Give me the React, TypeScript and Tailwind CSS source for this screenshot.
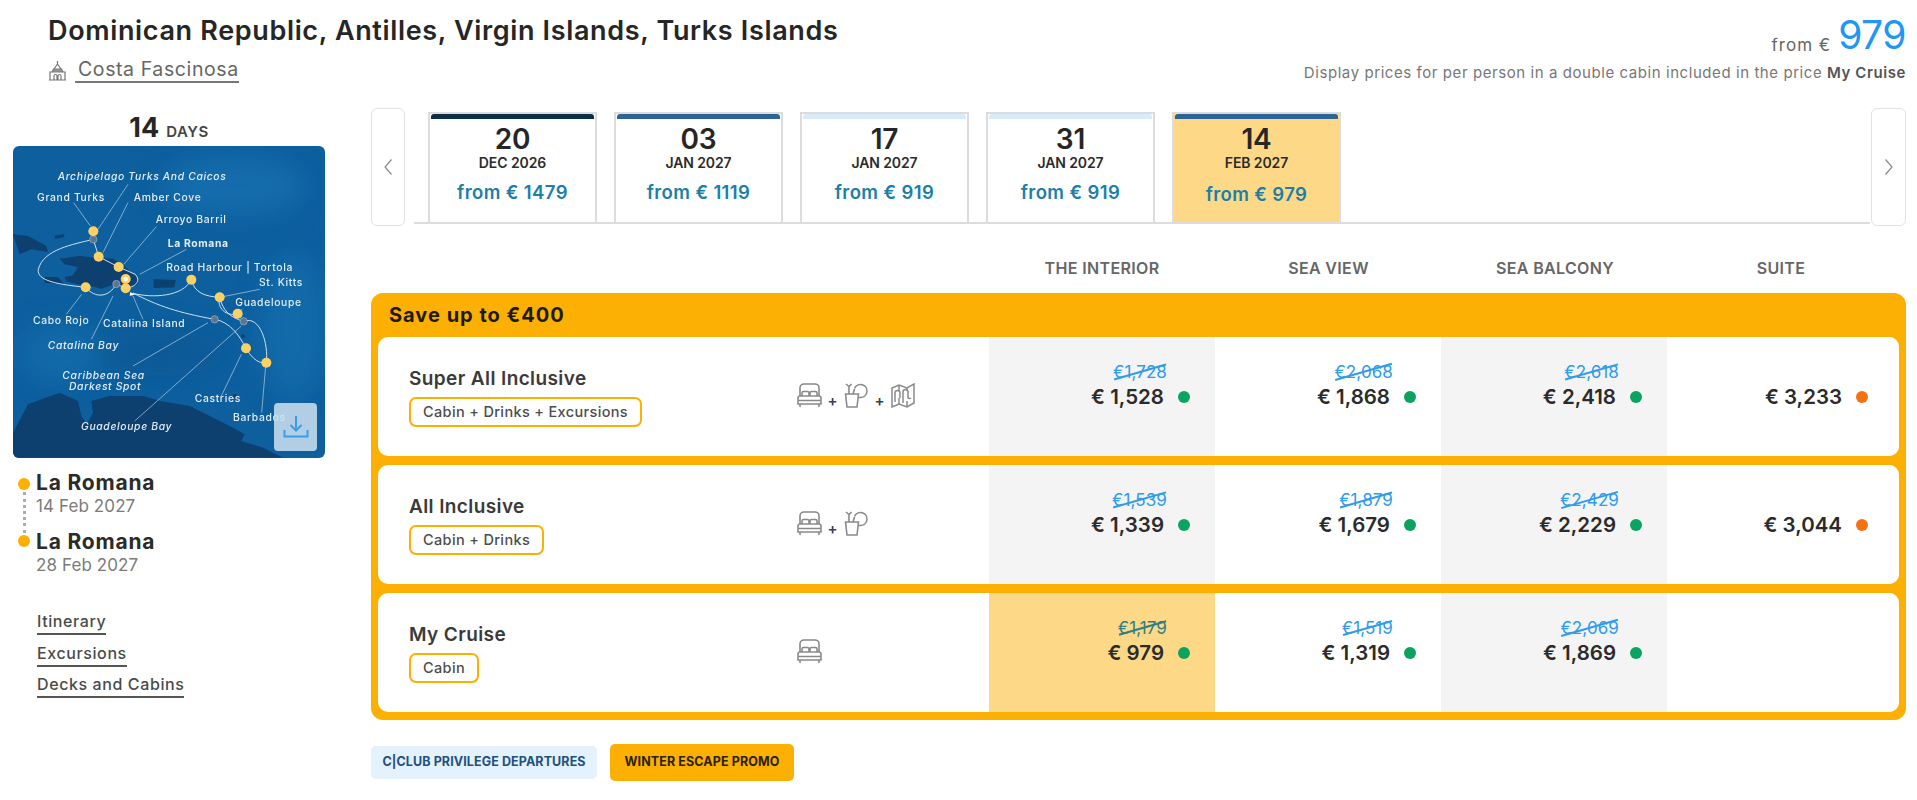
const sans = { fontFamily: '"Inter", "Liberation Sans", sans-serif' };

const departures = [
  { day: "20", month: "DEC 2026", price: "from € 1479", bar: "bg-[#0b2f48]" },
  { day: "03", month: "JAN 2027", price: "from € 1119", bar: "bg-[#2b6597]" },
  { day: "17", month: "JAN 2027", price: "from € 919", bar: "bg-[#d8ebfa]" },
  { day: "31", month: "JAN 2027", price: "from € 919", bar: "bg-[#d8ebfa]" },
  { day: "14", month: "FEB 2027", price: "from € 979", bar: "bg-[#2b6597]", active: true },
];

type Cell = { old?: string; price?: string; dot?: string; active?: boolean };

const rows: { name: string; tag: string; icons: number; cells: Cell[] }[] = [
  {
    name: "Super All Inclusive",
    tag: "Cabin + Drinks + Excursions",
    icons: 3,
    cells: [
      { old: "€1,728", price: "€ 1,528", dot: "bg-[#0ba360]" },
      { old: "€2,068", price: "€ 1,868", dot: "bg-[#0ba360]" },
      { old: "€2,618", price: "€ 2,418", dot: "bg-[#0ba360]" },
      { price: "€ 3,233", dot: "bg-[#f57212]" },
    ],
  },
  {
    name: "All Inclusive",
    tag: "Cabin + Drinks",
    icons: 2,
    cells: [
      { old: "€1,539", price: "€ 1,339", dot: "bg-[#0ba360]" },
      { old: "€1,879", price: "€ 1,679", dot: "bg-[#0ba360]" },
      { old: "€2,429", price: "€ 2,229", dot: "bg-[#0ba360]" },
      { price: "€ 3,044", dot: "bg-[#f57212]" },
    ],
  },
  {
    name: "My Cruise",
    tag: "Cabin",
    icons: 1,
    cells: [
      { old: "€1,179", price: "€ 979", dot: "bg-[#0ba360]", active: true },
      { old: "€1,519", price: "€ 1,319", dot: "bg-[#0ba360]" },
      { old: "€2,069", price: "€ 1,869", dot: "bg-[#0ba360]" },
      {},
    ],
  },
];

function Bed() {
  return (
    <svg width="25" height="25" viewBox="0 0 25 25" fill="none" stroke="#8a8a8a" strokeWidth="1.6">
      <path d="M3 13V5a4 4 0 0 1 4-4h11a4 4 0 0 1 4 4v8" />
      <path d="M5 13v-3a1.500 1.500 0 0 1 1.500-1.500h4A1.500 1.500 0 0 1 12 10v3M13 13v-3a1.500 1.500 0 0 1 1.500-1.500h4A1.500 1.500 0 0 1 20 10v3" />
      <path d="M1 15a2 2 0 0 1 2-2h19a2 2 0 0 1 2 2v6H1zM1 17.500h23M3 21v3M22 21v3" />
    </svg>
  );
}

function Drink() {
  return (
    <svg width="25" height="25" viewBox="0 0 25 25" fill="none" stroke="#8a8a8a" strokeWidth="1.6">
      <path d="M1.500 11h13l-1.500 13H3z" />
      <path d="M5 11V3.500M2 1l3 2.500L7.500 1M9 11l1.500-5" />
      <path d="M10.500 5.500a6.500 6.500 0 1 1 6 9h-2" />
    </svg>
  );
}

function MapIcon() {
  return (
    <svg width="24" height="25" viewBox="0 0 24 25" fill="none" stroke="#8a8a8a" strokeWidth="1.500">
      <path d="M1 5l7-3 8 3 7-4v19l-7 4-8-3-7 3z" />
      <path d="M8 2v6M8 15v6M16 5v3M16 18v6" />
      <path d="M4 19v-9a2.500 2.500 0 0 1 5 0v5M12 20V9a2.500 2.500 0 0 1 5 0v6a2.500 2.500 0 0 0 3 0" />
    </svg>
  );
}

function Plus() {
  return <span className="mt-[10px] w-[11px] text-center text-[15px] leading-none font-semibold text-[#3b3f55]">+</span>;
}

function Ship() {
  return (
    <svg width="19" height="21" viewBox="0 0 19 21" fill="none" stroke="#777" strokeWidth="1.200">
      <path d="M9.500 1v3M6 9l3.500-5L13 9" />
      <path d="M4 12l1.500-3h8L15 12" fill="#999" />
      <path d="M2 12h15v8H2zM1 20h17" />
      <path d="M6 20v-4a1.500 1.500 0 0 1 3 0v4M10 20v-4a1.500 1.500 0 0 1 3 0v4" />
    </svg>
  );
}

function RouteMap() {
  const pins = [
    [281, 276], [297, 352], [357, 383], [378, 419], [378, 447], [258, 444],
    [575, 421], [660, 474], [714, 523], [739, 627], [800, 670],
  ];
  const grey = [[281, 300], [350, 434], [645, 540], [732, 546]];
  const labels: [string, number, number, boolean?, boolean?][] = [
    ["Archipelago Turks And Caicos", 174, 122, true],
    ["Grand Turks", 112, 184],
    ["Amber Cove", 402, 186],
    ["Arroyo Barril", 468, 252],
    ["La Romana", 504, 322, false, true],
    ["Road Harbour | Tortola", 500, 396],
    ["St. Kitts", 778, 441],
    ["Guadeloupe", 707, 499],
    ["Cabo Rojo", 100, 553],
    ["Catalina Island", 310, 563],
    ["Catalina Bay", 144, 628, true],
    ["Caribbean Sea", 188, 718, true],
    ["Darkest Spot", 208, 752, true],
    ["Castries", 585, 789],
    ["Barbados", 700, 845],
    ["Guadeloupe Bay", 244, 871, true],
  ];
  return (
    <svg viewBox="40 20 936 936" className="block h-full w-full">
      <defs>
        <filter id="soft">
          <feGaussianBlur stdDeviation="1.200" />
        </filter>
        <filter id="wash">
          <feGaussianBlur stdDeviation="40" />
        </filter>
      </defs>
      <rect x="40" y="20" width="936" height="936" fill="#0d5f9e" />
      <g filter="url(#wash)" opacity="0.55">
        <ellipse cx="700" cy="140" rx="220" ry="90" fill="#1a78b8" />
        <ellipse cx="880" cy="560" rx="100" ry="220" fill="#1873b2" />
        <ellipse cx="480" cy="640" rx="200" ry="70" fill="#0a5592" />
        <ellipse cx="180" cy="640" rx="120" ry="90" fill="#1873b2" />
      </g>
      <g filter="url(#soft)">
        <g fill="#0b3f6e">
          <path d="M40 285l45 5 55 30 5 18-50-8-35 15z" />
          <path d="M180 358l60-8 50 6 50 2 40 28 32 30 3 18-40 12-40-8-30 10-30-8-45-6-30-8-5-12 25-6 15-25-40-8z" />
          <path d="M135 412l40 2 18 20-58-4z" />
          <path d="M462 420l66 2-4 22-62 2z" />
          <path d="M165 290l30-6-4 10-24 4z" />
          <path d="M40 955V880L85 795L180 760L235 785L245 830L262 855L280 820L275 785L330 770L430 770L480 785L570 800L640 835L700 865L735 885L725 905L790 925L850 955Z" />
          <circle cx="730" cy="590" r="5" />
          <circle cx="705" cy="770" r="6" />
        </g>
        <g fill="none" stroke="#cfe0ee" strokeWidth="3">
          <path d="M281 300c-60 15-150 30-165 90-6 35 60 45 142 54" />
          <path d="M281 300l16 52 60 31 50 22c18 20 0 38-29 42" />
          <path d="M258 444c30 35 70 30 92-10l28 13" />
          <path d="M400 462c60 15 150 10 175-41 10 40 40 50 85 53 10 40 30 60 72 72 50-20 75 70 68 124-30 5-50-25-61-43-20-40-50-80-94-87-110-20-170-40-245-79" />
          <path d="M660 474c-10 30 20 60 54 49" />
        </g>
        <g fill="none" stroke="#b9d2e6" strokeWidth="2">
          <path d="M222 190l50 70M385 135L295 270M385 190L310 340M470 262L372 375M560 330L420 405M780 450l-110 22M728 510l-10 5M246 465l-46 60M400 470l30 70M340 470L275 600M625 550L400 680M725 560L405 845M725 645L665 770M798 680l-12 140" />
        </g>
        <path d="M392 458l14 8-16 3z" fill="#fff" />
        {grey.map(([x, y]) => (
          <circle key={`${x}-${y}`} cx={x} cy={y} r="11" fill="#5a7690" stroke="#b8c8d6" strokeWidth="1.500" />
        ))}
        {pins.map(([x, y]) => (
          <circle key={`${x}-${y}`} cx={x} cy={y} r="15" fill="#fcd062" />
        ))}
        <circle cx="378" cy="419" r="7" fill="#fff" opacity="0.85" />
        {labels.map(([text, x, y, italic, bold]) => (
          <text
            key={text}
            x={x}
            y={y}
            fill="#e3edf5"
            fontSize="31"
            letterSpacing="2"
            fontStyle={italic ? "italic" : "normal"}
            fontWeight={bold ? 700 : 500}
            style={sans}
          >
            {text}
          </text>
        ))}
      </g>
    </svg>
  );
}

function OldPrice({ value, active }: { value: string; active?: boolean }) {
  return (
    <span
      className={`relative mr-[23px] text-[17px] leading-[20px] tracking-[0.1px] ${
        active ? "text-[#2f7f86]" : "text-[#2f9bea]"
      }`}
    >
      {value}
      <span
        className={`absolute top-[9px] left-0 h-[1.5px] w-full -rotate-[16deg] ${
          active ? "bg-[#2f7f86]" : "bg-[#2f9bea]"
        }`}
      />
    </span>
  );
}

export default function App() {
  return (
    <div className="h-[800px] w-full overflow-hidden bg-white text-[#2b2b2b]" style={sans}>
      <div className="flex items-start justify-between pt-[13px] pr-[11px] pl-[48px]">
        <div>
          <h1 className="text-[27px] leading-[36px] font-semibold tracking-[0.65px] text-[#262626]">
            Dominican Republic, Antilles, Virgin Islands, Turks Islands
          </h1>
          <div className="mt-[8px] flex items-center">
            <Ship />
            <a className="ml-[8px] border-b-2 border-[#777] pl-[3px] text-[19.500px] leading-[24px] tracking-[0.6px] text-[#666]">
              Costa Fascinosa
            </a>
          </div>
        </div>
        <div className="flex flex-col items-end">
          <div className="flex h-[44px] items-end">
            <span className="mr-[7px] mb-[1px] text-[17px] leading-[22px] tracking-[1px] text-[#666]">from €</span>
            <span className="text-[39px] leading-[44px] tracking-[-0.5px] text-[#2196f3]">979</span>
          </div>
          <p className="mt-[7px] text-[15px] leading-[18px] tracking-[0.57px] text-[#777]">
            Display prices for per person in a double cabin included in the price{" "}
            <span className="font-semibold text-[#555]">My Cruise</span>
          </p>
        </div>
      </div>

      <div className="mt-[25px] flex pl-[13px]">
        <aside className="w-[312px]">
          <div className="mt-[4px] flex h-[32px] items-baseline justify-center leading-[32px]">
            <span className="text-[27px] font-bold text-[#262626]">14</span>
            <span className="ml-[7px] text-[15px] font-semibold tracking-[0.5px] text-[#444]">DAYS</span>
          </div>
          <div className="relative mt-[2px] h-[312px] w-[312px] overflow-hidden rounded-[6px]">
            <RouteMap />
            <div className="absolute right-[8px] bottom-[7px] flex h-[48px] w-[43px] items-center justify-center rounded-[4px] bg-[#cfe2f0]/85">
              <svg width="26" height="26" viewBox="0 0 26 26" fill="none" stroke="#3c9ce6" strokeWidth="2">
                <path d="M13 2v14M7.500 11l5.500 5.500 5.500-5.500M1.500 16v6.500h23V16" />
              </svg>
            </div>
          </div>

          <div className="mt-[13px] flex">
            <div className="ml-[5px] flex w-[12px] flex-col items-center pt-[7px]">
              <span className="size-[12px] rounded-full bg-[#fbb003]" />
              <span className="my-[2px] h-[41px] border-l-[3px] border-dotted border-[#a9adb5]" />
              <span className="size-[12px] rounded-full bg-[#fbb003]" />
            </div>
            <div className="ml-[6px]">
              <div className="text-[21px] leading-[24px] font-bold tracking-[0.8px] text-[#2b2b2b]">La Romana</div>
              <div className="text-[17px] leading-[22px] tracking-[0.1px] text-[#7b7b7b]">14 Feb 2027</div>
              <div className="mt-[13px] text-[21px] leading-[24px] font-bold tracking-[0.8px] text-[#2b2b2b]">La Romana</div>
              <div className="text-[17px] leading-[22px] tracking-[0.1px] text-[#7b7b7b]">28 Feb 2027</div>
            </div>
          </div>

          <nav className="mt-[34px] ml-[24px] flex flex-col items-start gap-[6.5px] text-[16px] leading-[22px] font-medium tracking-[0.6px] text-[#4a4a4a]">
            <a className="border-b-2 border-[#555] pb-[1px]">Itinerary</a>
            <a className="border-b-2 border-[#555] pb-[1px]">Excursions</a>
            <a className="border-b-2 border-[#555] pb-[1px]">Decks and Cabins</a>
          </nav>
        </aside>

        <main className="ml-[46px] w-[1535px]">
          <div className="flex h-[118px] items-start">
            <button className="flex h-[118px] w-[34px] items-center justify-center rounded-[6px] border border-[#e2e2e2] bg-white">
              <svg width="10" height="18" viewBox="0 0 10 18" fill="none" stroke="#8a8a8a" strokeWidth="1.200">
                <path d="M8.500 1.500L2 9l6.500 7.500" />
              </svg>
            </button>
            <div className="ml-[9px] h-[116px] w-[1456px] border-b-2 border-[#dcdcdc]">
              <div className="ml-[14px] flex gap-[17px] pt-[4px]">
                {departures.map((d) => (
                  <div
                    key={d.day}
                    className={`flex h-[110px] w-[169px] flex-col items-center border-2 border-b-0 border-[#dcdcdc] ${
                      d.active ? "bg-[#fdd987]" : "bg-white"
                    }`}
                  >
                    <span className={`mx-[2px] h-[5px] w-[163px] rounded-t-[3px] ${d.bar}`} />
                    <span className="mt-[7px] text-[28px] leading-[26px] font-semibold tracking-[-0.2px] text-[#262626]">
                      {d.day}
                    </span>
                    <span className="mt-[2px] text-[14px] leading-[18px] font-semibold tracking-[-0.1px] text-[#2b2b2b]">
                      {d.month}
                    </span>
                    <span
                      className={`text-[18.500px] leading-[24px] font-semibold tracking-[0.4px] text-[#1b7fa9] ${
                        d.active ? "mt-[10px]" : "mt-[8px]"
                      }`}
                    >
                      {d.price}
                    </span>
                  </div>
                ))}
              </div>
            </div>
            <button className="ml-[1px] flex h-[118px] w-[35px] items-center justify-center rounded-[6px] border border-[#e2e2e2] bg-white">
              <svg width="10" height="18" viewBox="0 0 10 18" fill="none" stroke="#8a8a8a" strokeWidth="1.200">
                <path d="M1.500 1.500L8 9l-6.500 7.500" />
              </svg>
            </button>
          </div>

          <div className="mt-[24px] flex h-[36px] items-center pl-[618px] text-[16px] font-semibold tracking-[0.35px] text-[#666]">
            <span className="w-[226px] text-center">THE INTERIOR</span>
            <span className="w-[227px] text-center">SEA VIEW</span>
            <span className="w-[226px] text-center">SEA BALCONY</span>
            <span className="w-[226px] text-center">SUITE</span>
          </div>

          <section className="mt-[7px] h-[427px] rounded-[12px] bg-[#fbb003] px-[7px] pb-[8px]">
            <div className="flex h-[44px] items-center pl-[11px] text-[20px] font-bold tracking-[1px] text-[#1d1a10]">
              Save up to €400
            </div>
            <div className="flex flex-col gap-[9px]">
              {rows.map((row) => (
                <div key={row.name} className="flex h-[119px] overflow-hidden rounded-[10px] bg-white">
                  <div className="w-[419px] pt-[29px] pl-[31px]">
                    <div className="text-[19px] leading-[26px] font-semibold tracking-[0.4px] text-[#3a3a3a]">{row.name}</div>
                    <span className="mt-[5px] inline-block rounded-[7px] border-2 border-[#fbb003] px-[12px] text-[14.500px] leading-[26px] font-medium tracking-[0.35px] text-[#4d4d4d]">
                      {row.tag}
                    </span>
                  </div>
                  <div className="w-[192px] pt-[46px]">
                    <div className="flex items-start">
                      <Bed />
                      {row.icons > 1 && (
                        <>
                          <span className="ml-[5px]" />
                          <Plus />
                          <span className="ml-[6px]" />
                          <Drink />
                        </>
                      )}
                      {row.icons > 2 && (
                        <>
                          <span className="ml-[5px]" />
                          <Plus />
                          <span className="ml-[6px]" />
                          <MapIcon />
                        </>
                      )}
                    </div>
                  </div>
                  {row.cells.map((c, i) => (
                    <div
                      key={i}
                      className={`flex flex-col items-end pt-[25px] ${i === 3 ? "w-[232px] pr-[31px]" : "w-[226px] pr-[25px]"} ${
                        c.active ? "bg-[#fdd987]" : i % 2 === 0 ? "bg-[#f4f4f4]" : "bg-white"
                      }`}
                    >
                      {c.old && <OldPrice value={c.old} active={c.active} />}
                      {c.price && (
                        <div className={`flex items-center gap-[14px] ${c.old ? "mt-[2px]" : "mt-[22px]"}`}>
                          <span className="text-[20.500px] leading-[26px] font-semibold tracking-[0px] text-[#2b2b2b]">{c.price}</span>
                          <span className={`size-[12px] rounded-full ${c.dot}`} />
                        </div>
                      )}
                    </div>
                  ))}
                </div>
              ))}
            </div>
          </section>

          <div className="mt-[24px] flex items-center gap-[13px]">
            <span className="flex h-[33px] w-[226px] items-center justify-center rounded-[5px] bg-[#e3f2fd] text-[12.500px] font-bold tracking-[0.1px] text-[#24507f]">
              C|CLUB PRIVILEGE DEPARTURES
            </span>
            <span className="flex h-[37px] w-[184px] items-center justify-center rounded-[5px] bg-[#fbb003] text-[12.500px] font-bold tracking-[0.1px] text-[#2b2108]">
              WINTER ESCAPE PROMO
            </span>
          </div>
        </main>
      </div>
    </div>
  );
}
